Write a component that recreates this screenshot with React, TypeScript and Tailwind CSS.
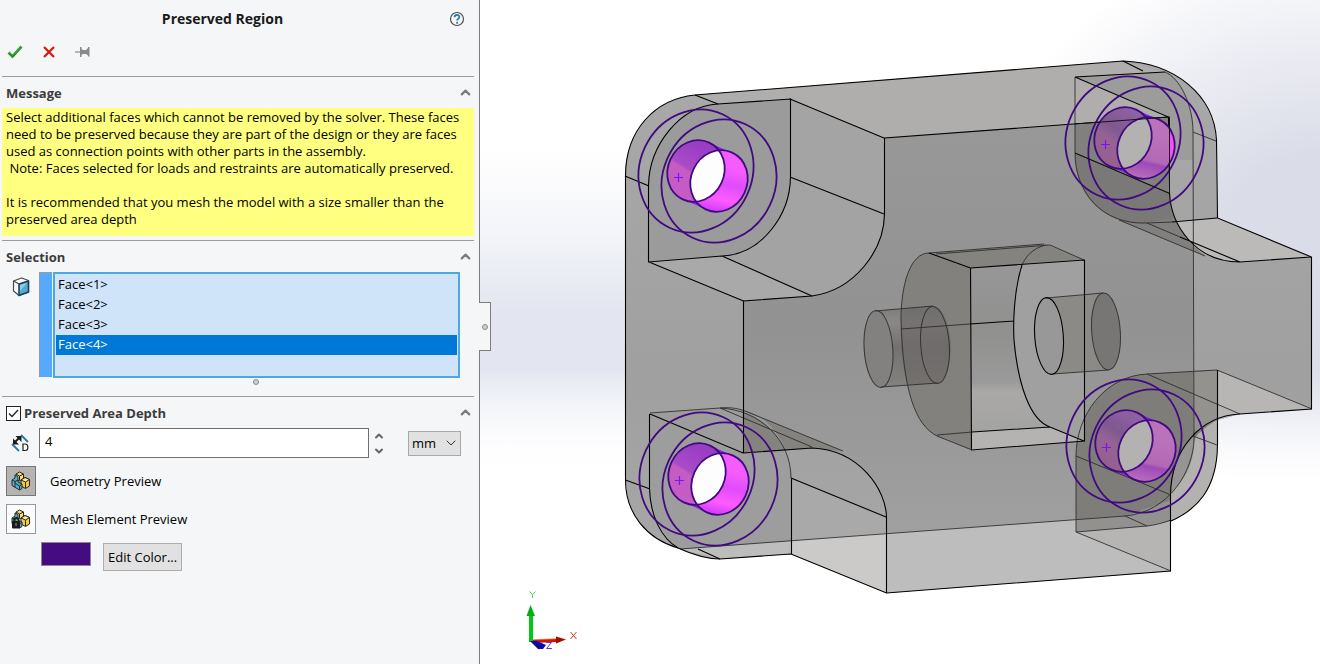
import { useState } from 'react'
import { ChevronDown, ChevronUp } from 'lucide-react'

const FACES = ["Face<1>", "Face<2>", "Face<3>", "Face<4>"]

// centre of the near rim of every bolt hole
const HOLES = [
    { id: "tl", x: 719, y: 181, muted: false },
    { id: "bl", x: 720, y: 484, muted: false },
    { id: "tr", x: 1146, y: 148, muted: true },
    { id: "br", x: 1147, y: 451, muted: true },
]

const CheckIcon = () => (
    <svg width="16" height="14" viewBox="0 0 16 14">
        <path d="M1.5 7.5 5.5 11.5 14.5 1.5" fill="none" stroke="#2ea32e" strokeWidth="2.8" />
        <path d="M2 8.5 5.5 12 9 8.5" fill="none" stroke="#1d7f22" strokeWidth="1" />
    </svg>
)

const CancelIcon = () => (
    <svg width="12" height="12" viewBox="0 0 12 12">
        <path d="M1 1 11 11M11 1 1 11" stroke="#d8180c" strokeWidth="2.2" />
    </svg>
)

const PinIcon = () => (
    <svg width="15" height="12" viewBox="0 0 15 12">
        <path d="M0 6H6" stroke="#8a8a8a" strokeWidth="1.2" />
        <path d="M5 1H6.5V3L8 4H11L13 2V1H14.5V10.500H13V9.500L11 8H8L6.500 9V11H5Z" fill="#8a8a8a" />
    </svg>
)

const HelpIcon = () => (
    <svg width="16" height="16" viewBox="0 0 16 16">
        <circle cx="8" cy="8" r="6.500" fill="#f6f8fa" stroke="#4d4d4d" strokeWidth="1.200" />
        <path d="M5.600 6.200C5.600 3.300 10.400 3.300 10.400 6.100C10.400 7.700 8.100 7.700 8.100 9.600" fill="none" stroke="#2f7fae" strokeWidth="1.800" />
        <rect x="7.200" y="10.800" width="1.900" height="1.900" fill="#2f7fae" />
    </svg>
)

const FaceIcon = () => (
    <svg width="18" height="20" viewBox="0 0 18 20">
        <path d="M1.500 4 9.500 1 16.500 3.500V15L7 18.500 1.500 14Z" fill="#fafafa" stroke="#4a4a4a" strokeWidth="1.200" strokeLinejoin="round" />
        <path d="M7 7 16.500 4V15L7 18.500Z" fill="#5aa9cd" stroke="#123f5c" strokeWidth="1.500" strokeLinejoin="round" />
        <path d="M8 8 15 6 8 14Z" fill="#8fcbe4" />
        <path d="M1.500 4 7 7" stroke="#4a4a4a" strokeWidth="1.200" />
    </svg>
)

const DepthIcon = () => (
    <svg width="20" height="20" viewBox="0 0 20 20">
        <path d="M10 2 17 9M1 11 8 18" stroke="#2b78ad" strokeWidth="1.800" />
        <path d="M4 9 9 4" stroke="#1c1c1c" strokeWidth="2" />
        <path d="M4.500 3H10.500V9ZM2 5.500V11.500H8Z" fill="#1c1c1c" />
        <path d="M12 11H14C17.800 11 17.800 17.500 14 17.500H12Z" fill="#fff" stroke="#1c1c1c" strokeWidth="1.200" />
    </svg>
)

const PartIcon = ({ locked }: { locked?: boolean }) => (
    <svg width="20" height="20" viewBox="0 0 20 20">
        <g stroke="#2a2a1c" strokeWidth="1" strokeLinejoin="round">
            <path d="M5 3 8.500 1 12.500 3V8L8 10 5 8Z" fill="#f3dc86" />
            <path d="M5 3 8.500 5 12.500 3M8.500 5V9" fill="none" />
            <path d="M10 9 14 6.500 18.500 8.500V15L14.500 17.500 10 15Z" fill="#f0c84a" />
            <path d="M10 9 14.500 11 18.500 8.500 14 6.500Z" fill="#fae9a0" />
            <path d="M14.500 11V17" fill="none" />
            <path d="M1 9 4 7V4L7 5.500V11L11 13V17.500L8.500 19 1 14.500Z" fill="#4fb0d4" />
            <path d="M1 9 4 10.500 7 9M4 10.500V16M4 12 8.500 15 11 13M8.500 15V18.500" fill="none" />
        </g>
        {locked && (
            <g>
                <path d="M3 13V11C3 8 7.500 8 7.500 11V13" fill="none" stroke="#1a1a1a" strokeWidth="1.500" />
                <rect x="1" y="12" width="8" height="7.500" rx="1" fill="#1a1a1a" />
                <path d="M5 14V17" stroke="#999" />
            </g>
        )}
    </svg>
)

const Section = ({ title, children }: { title: React.ReactNode, children: React.ReactNode }) => {
    const [open, setOpen] = useState(true)

    return (
        <section className="ml-0.5 mr-[5px] border-t border-[#9c9c9c]">
            <div className="flex h-[31px] items-center justify-between pl-1 pr-px">
                <h2 className="pt-px text-[13px] font-bold text-[#3c3c3c]">{title}</h2>
                <button type="button" aria-label="Toggle section" onClick={() => setOpen(!open)}>
                    {open ? <ChevronUp size={15} strokeWidth={3.5} color="#7c7c7c" /> : <ChevronDown size={15} strokeWidth={3.5} color="#7c7c7c" />}
                </button>
            </div>
            {open && children}
        </section>
    )
}

const Hole = ({ id, x, y, muted }: { id: string, x: number, y: number, muted: boolean }) => (
    <g transform={`translate(${x} ${y})`}>
        <clipPath id={`near-${id}`}>
            <ellipse rx="28.100" ry="31.300" transform="rotate(25)" />
        </clipPath>
        <path d="M-10.400 -38.600 12.600 -28.600 -12.600 28.600 -35.600 18.600Z" fill="#8a1ff0" />
        <ellipse rx="28.100" ry="31.300" transform="translate(-23 -10) rotate(25)" fill={muted ? "url(#farMuted)" : "url(#far)"} />
        <ellipse rx="28.100" ry="31.300" transform="rotate(25)" fill={muted ? "url(#nearMuted)" : "url(#near)"} />
        {id === "tr" && <rect x="23" y="-25" width="8" height="48" fill="#f94dfd" clipPath="url(#near-tr)" />}
        <g clipPath={`url(#near-${id})`}>
            <ellipse rx="28.100" ry="31.300" transform="translate(-23 -10) rotate(25)" fill={muted ? "#b4b2b0" : "#fdfdfe"} />
        </g>
        <g fill="none" stroke="#400a80" strokeWidth="1.800">
            <ellipse rx="28.100" ry="31.300" transform="translate(-23 -10) rotate(25)" />
            <ellipse rx="28.100" ry="31.300" transform="rotate(25)" />
            <ellipse rx="56.300" ry="62.600" transform="translate(-23 -10) rotate(25)" />
            <ellipse rx="56.300" ry="62.600" transform="rotate(25)" />
        </g>
        <path d="M-45 -3.500H-36M-40.500 -8V1" stroke="#7a14f5" strokeWidth="1.200" />
    </g>
)

const Model = () => (
    <svg viewBox="480 0 840 664" className="block h-full w-full" role="img" aria-label="Model view">
        <defs>
            <linearGradient id="far" x1="0.300" y1="0" x2="0.200" y2="1">
                <stop offset="0.150" stopColor="#9a3fc4" />
                <stop offset="0.500" stopColor="#ab4cc6" />
                <stop offset="0.550" stopColor="#c45cc2" />
                <stop offset="1" stopColor="#c65cc6" />
            </linearGradient>
            <linearGradient id="near" x1="0.300" y1="0" x2="0.500" y2="1">
                <stop offset="0.300" stopColor="#f45cfd" />
                <stop offset="0.550" stopColor="#e04cfb" />
                <stop offset="0.800" stopColor="#ff5cff" />
                <stop offset="1" stopColor="#cf3bff" />
            </linearGradient>
            <linearGradient id="farMuted" x1="0.300" y1="0" x2="0.200" y2="1">
                <stop offset="0" stopColor="#9062a4" />
                <stop offset="0.400" stopColor="#805890" />
                <stop offset="0.600" stopColor="#966394" />
                <stop offset="1" stopColor="#95608f" />
            </linearGradient>
            <linearGradient id="nearMuted" x1="0.300" y1="0" x2="0.500" y2="1">
                <stop offset="0.300" stopColor="#ba72bb" />
                <stop offset="0.700" stopColor="#b368b5" />
                <stop offset="0.750" stopColor="#9c4bb8" />
                <stop offset="1" stopColor="#bb6cba" />
            </linearGradient>
            <linearGradient id="body" x1="0" y1="0" x2="0" y2="1">
                <stop offset="0" stopColor="#a9a9a9" />
                <stop offset="0.600" stopColor="#a0a0a0" />
                <stop offset="1" stopColor="#a8a8a8" />
            </linearGradient>
            <linearGradient id="front" x1="0" y1="0" x2="0" y2="1">
                <stop offset="0" stopColor="#989898" />
                <stop offset="0.500" stopColor="#929292" />
                <stop offset="1" stopColor="#a0a0a0" />
            </linearGradient>
            <linearGradient id="bore" x1="0" y1="0" x2="0" y2="1">
                <stop offset="0" stopColor="#979797" />
                <stop offset="0.400" stopColor="#90908f" />
                <stop offset="0.700" stopColor="#9a9a9a" />
                <stop offset="0.760" stopColor="#aaa9a8" />
                <stop offset="1" stopColor="#a3a3a2" />
            </linearGradient>
            <linearGradient id="pin" x1="0" y1="0" x2="0" y2="1">
                <stop offset="0" stopColor="#7c7b79" />
                <stop offset="0.200" stopColor="#8a8886" />
                <stop offset="0.500" stopColor="#747270" />
                <stop offset="1" stopColor="#84827f" />
            </linearGradient>
        </defs>

        {/* silhouette */}
        <path d="M625 176C625 130 655 99 695 95L1123 61C1175 63 1214 95 1216 140L1217 218 1311 257 1312 409 1240 414 1217 420V445C1217 490 1196 510 1171 521V571L887 593 791 554 720 559C704 559 689 553 678 548 647 539 626 514 626 480Z" fill="url(#body)" />

        {/* top, right and bottom sides */}
        <path d="M695 95 1123 61 1165 72 1075 77 1168 117 884 138 790 99 718 104Z" fill="#b0aeac" />
        <path d="M1075 77 1165 72C1180 78 1193 105 1193 132V160L1169 160 1168 117Z" fill="#9c9c9b" />
        <path d="M1147 223 1217 218 1311 257 1240 262C1195 262 1171 225 1169 203Z" fill="#bbbab8" />
        <path d="M680 549 1125 516 1171 500V571L887 593 791 554 720 559Z" fill="#bdbdbd" />
        <path d="M791 541 886 533 887 593 791 554Z" fill="#cbcac8" />
        <path d="M1217 370 1312 409 1240 414 1217 420Z" fill="#b7b6b4" />
        <path d="M1171 495 1200 430 1217 420V445C1217 490 1196 510 1171 521Z" fill="#b3b2b0" />

        {/* front face */}
        <path d="M884 138 1168 117 1169 193C1171 215 1180 236 1193 247V430C1178 448 1171 470 1171 495L1125 516 886 533V517C886 490 860 450 812 448L743 453V301L812 296C855 290 884 250 884 214Z" fill="url(#front)" />

        {/* left lugs */}
        <path d="M649 262V186C649 145 680 106 718 104L790 99V177C790 215 762 254 722 256Z" fill="#9b9b9b" />
        <path d="M790 99 884 138V214L790 177Z" fill="#a4a4a4" />
        <path d="M790 177 884 214C884 250 855 290 812 296L722 256C762 254 790 215 790 177Z" fill="#a3a3a3" />
        <path d="M649 262 722 256 812 296 743 301Z" fill="#a9a9a9" />
        <path d="M650 414 720 408C760 410 791 440 791 478V541L680 549C660 535 650 510 650 488Z" fill="#9d9d9d" />
        <path d="M791 478 886 517V533L791 541Z" fill="#a9a9a9" />
        <path d="M720 408 745 411 843 451 812 448 786 450C775 425 755 410 743 411V453L786 450C772 425 750 408 720 408Z" fill="#85837f" />

        {/* right lugs */}
        <path d="M1075 125 1168 117V193C1171 215 1180 236 1205 256L1119 220C1090 210 1075 185 1075 153Z" fill="#82807e" />
        <path d="M1075 153 1169 193 1172 218 1147 223C1100 225 1075 190 1075 153Z" fill="#7a7977" />
        <path d="M1076 532V456C1076 415 1105 376 1147 374L1217 370V420C1190 435 1171 465 1171 495V521L1147 526Z" fill="#7f7d7a" />
        <path d="M1193 372 1217 370V420L1193 432Z" fill="#94928f" />
        <path d="M1076 519 1125 516 1171 500V521L1147 526 1076 532Z" fill="#92918f" />
        <path d="M1171 495C1172 465 1182 445 1194 436V445C1193 465 1185 480 1171 493Z" fill="#969594" />
        <path d="M1076 532 1147 526 1171 521V571Z" fill="#b6b5b3" />

        {/* centre pocket */}
        <path d="M929 253C910 253 901 285 901 320C903 390 915 425 937 436L972 450 970 268Z" fill="#83817e" />
        <path d="M929 253 1046 244 1084 260 970 268Z" fill="#85837f" />
        <path d="M970 268 1084 260V441L972 450Z" fill="#a0a0a0" />
        <path d="M970 268 1022 265C1014 290 1013 322 1014 340 1018 385 1030 420 1050 427L972 432Z" fill="url(#bore)" />
        <path d="M972 432 1050 427 1084 441 972 450Z" fill="#b4b3b1" />

        {/* pins */}
        <path d="M875 311 933 306C955 310 956 375 938 383L881 387C860 385 858 315 875 311Z" fill="url(#pin)" />
        <path d="M902 309 933 306C955 310 956 375 938 383L908 385C900 360 900 330 902 309Z" fill="#6c6a68" opacity="0.700" />
        <ellipse cx="878.500" cy="349" rx="14.300" ry="38.500" transform="rotate(-4 878.500 349)" fill="#83817f" />
        <path d="M1046 298 1103 293C1125 297 1126 362 1108 370L1053 374Z" fill="#8c8a87" />
        <ellipse cx="1106" cy="331.500" rx="14.300" ry="38.500" transform="rotate(-4 1106 331.500)" fill="#787674" />
        <ellipse cx="1049" cy="336" rx="14.300" ry="38.500" transform="rotate(-4 1049 336)" fill="#989898" />

        {/* hidden edges */}
        <g fill="none" stroke="#2a2a2a" strokeWidth="1" opacity="0.850">
            <path d="M1075 77V153C1075 190 1100 225 1147 223M1119 220 1205 256M1147 223 1180 237M1075 153 1169 193M1147 223 1172 222" />
            <path d="M1165 72C1180 78 1193 105 1193 132L1194 440C1193 470 1170 512 1125 516L680 549M1193 132 1216 141" />
            <path d="M1193 436 1217 445M1125 516 1147 526M1147 374 1240 414M1217 370 1312 409" />
            <path d="M1217 370 1147 374C1105 376 1076 415 1076 456V532L1171 571M1076 456 1171 495M1076 532 1147 526C1155 525 1163 523 1171 520" />
            <path d="M650 413 720 408C760 410 791 440 791 478M720 408 812 447M720 408C728 407 737 408 745 411L843 451" />
            <path d="M901 329 970 324M937 435 972 432M929 253C910 253 901 285 901 320C903 390 915 425 937 436L972 450" />
            <path d="M929 253 1044 244M936 254 1050 245 1084 260M1046 245C1032 248 1025 258 1022 265" />
            <path d="M875 311 933 306M881 387 938 383M1046 298 1103 293M1053 374 1108 370" />
            <ellipse cx="878.500" cy="349" rx="14.300" ry="38.500" transform="rotate(-4 878.500 349)" />
            <ellipse cx="935" cy="345" rx="14.300" ry="38.500" transform="rotate(-4 935 345)" />
            <ellipse cx="1106" cy="331.500" rx="14.300" ry="38.500" transform="rotate(-4 1106 331.500)" />
        </g>

        {/* visible edges */}
        <g fill="none" stroke="#000" strokeWidth="1.100">
            <path d="M625.500 176C625.500 130 655 99 695 95L1123 61C1175 63 1214 95 1216.500 140L1217.500 218 1311.500 257V409L1240 414C1200 416 1171 450 1170.500 495V571L886.500 593 791 554 720 559C704 559 689 553 678 548 647 539 625.500 514 625.500 480Z" />
            <path d="M695 95 718 104M625 176 649 186M1123 61 1143 71" />
            <path d="M648.500 262V186C649 145 680 106 718 104L790.500 99V177C790 215 762 254 722 256ZM790 99 884 138M790 177 884 214M722 256 812 296M649 262 743.500 301" />
            <path d="M743.500 453V301L812 296C855 290 884 250 884.500 214V138L1168 117" />
            <path d="M1217.500 370V445C1217 490 1196 510 1171 521" />
            <path d="M1075 77 1165 72M1075 77 1168.500 117 1169.500 193C1171 225 1195 262 1240 262L1311 257M1172 222 1217 218M1180 237 1240 262" />
            <path d="M625.500 480 650 489M649.500 414V488C650 515 661 538 678 548M650 414 743 453 812 448C860 450 886 490 886.500 517V593M791.500 478V554M791 478 886 517M698 549 720 559" />
            <path d="M929 253 970.500 268 1084.500 260V441L971.500 450 970.500 268M970 324 1014 321M972 432 1050 427 1084 441M1022 265C1014 290 1013 322 1014 340 1018 385 1030 420 1050 427" />
            <ellipse cx="1049" cy="336" rx="14.300" ry="38.500" transform="rotate(-4 1049 336)" />
        </g>

        {HOLES.map((hole) => {
            return <Hole key={hole.id} {...hole} />
        })}
        <path d="M1075 153 1169.500 193.500V117L1075 124" fill="none" stroke="#111" strokeWidth="1" />

        {/* origin triad */}
        <path d="M531 612V642" stroke="#00c814" strokeWidth="4" />
        <path d="M530.500 605 535 616H526.500Z" fill="#00b010" />
        <path d="M533 640 556 639" stroke="#d9a070" strokeWidth="1.500" />
        <path d="M533 641.500 557 640.500" stroke="#dc1200" strokeWidth="3" />
        <path d="M556 636.500 566 639.500 556 643.500Z" fill="#a30d00" />
        <path d="M530 641H537L546 645 543 649H538Z" fill="#0a0aa8" />
        <g fill="none" strokeWidth="1">
            <path d="M529.500 591.500 532.500 594.500 535.500 591.500M532.500 594.500V598" stroke="#4fd44f" />
            <path d="M570.500 632 576.500 639M576.500 632 570.500 639" stroke="#e03020" />
            <path d="M546 642.500H551.500L546.500 648.500H552" stroke="#4545e8" />
        </g>
    </svg>
)

const App = () => {
    const [selected, setSelected] = useState("Face<4>")
    const [depth, setDepth] = useState("4")
    const [enabled, setEnabled] = useState(true)
    const [preview, setPreview] = useState("geometry")

    const stepDepth = (step: number) => {
        setDepth(String(Math.max(0, Number(depth) + step)))
    }

    return (
        <div className="flex h-screen overflow-hidden bg-white font-['Open_Sans','Noto_Sans',sans-serif] text-[13px] leading-[17px] text-black">
            <aside className="relative w-[480px] shrink-0 border-r border-[#7d7d7d] bg-[#f4f6f8]">
                <header className="flex h-[38px] items-center pr-[14px]">
                    <h1 className="flex-1 pr-1 text-center text-sm font-bold text-[#1a1a1a]">Preserved Region</h1>
                    <button type="button" aria-label="Help"><HelpIcon /></button>
                </header>
                <div className="flex h-[38px] items-center gap-5 pb-[10px] pl-[7px]">
                    <button type="button" aria-label="OK"><CheckIcon /></button>
                    <button type="button" aria-label="Cancel"><CancelIcon /></button>
                    <button type="button" aria-label="Keep visible"><PinIcon /></button>
                </div>

                <Section title="Message">
                    <div className="mb-1 bg-[#ffff80] px-1 pb-2 pt-px">
                        <p>Select additional faces which cannot be removed by the solver. These faces<br />need to be preserved because they are part of the design or they are faces<br />used as connection points with other parts in the assembly.<br />&nbsp;Note: Faces selected for loads and restraints are automatically preserved.</p>
                        <p className="pt-[17px]">It is recommended that you mesh the model with a size smaller than the<br />preserved area depth</p>
                    </div>
                </Section>

                <Section title="Selection">
                    <div className="flex pr-[14px]">
                        <div className="w-[37px] pl-[10px] pt-[5px]"><FaceIcon /></div>
                        <div className="mb-px mr-px w-[13px] border-l border-t border-[#999] bg-[#55aaff]" />
                        <ul role="listbox" aria-label="Selected faces" className="h-[106px] flex-1 border-2 border-[#4aa9e2] bg-[#cfe4f8] p-px">
                            {FACES.map((face) => {
                                return (
                                    <li key={face} role="option" aria-selected={face === selected} onClick={() => setSelected(face)} className={face === selected ? "h-5 bg-[#0078d7] px-0.5 leading-[18px] text-white" : "h-5 px-0.5 leading-[18px]"}>{face}</li>
                                )
                            })}
                        </ul>
                    </div>
                    <div className="flex h-[18px] justify-center pr-10 pt-px pl-[76px]">
                        <span className="size-1.5 rounded-full border border-[#8c8c8c] bg-[#cfcfcf]" />
                    </div>
                </Section>

                <Section title={
                    <label className="flex items-center gap-[3px]">
                        <span className="grid size-[15px] place-items-center">
                            <input type="checkbox" checked={enabled} onChange={(e) => setEnabled(e.target.checked)} className="col-start-1 row-start-1 size-[15px] appearance-none border border-[#222] bg-white" />
                            {enabled && <svg width="11" height="9" viewBox="0 0 11 9" className="pointer-events-none col-start-1 row-start-1"><path d="M1 4.500 4 7.500 10 1" fill="none" stroke="#222" strokeWidth="1.300" /></svg>}
                        </span>
                        Preserved Area Depth
                    </label>
                }>
                    <div className="flex items-center pr-[13px]">
                        <div className="w-[37px] pl-[9px]"><DepthIcon /></div>
                        <input type="text" aria-label="Depth" value={depth} onChange={(e) => setDepth(e.target.value)} className="h-[30px] min-w-0 flex-1 border border-[#6f6f6f] bg-white px-[5px] pb-1" />
                        <div className="flex h-[30px] w-5 flex-col items-center justify-around">
                            <button type="button" aria-label="Increase" onClick={() => stepDepth(1)}><ChevronUp size={12} strokeWidth={4} color="#666" /></button>
                            <button type="button" aria-label="Decrease" onClick={() => stepDepth(-1)}><ChevronDown size={12} strokeWidth={4} color="#666" /></button>
                        </div>
                        <div className="ml-[19px] grid w-[53px] items-center">
                            <select aria-label="Unit" className="col-start-1 row-start-1 h-[25px] appearance-none border border-[#a8a8a8] bg-[#e1e1e1] pl-[3px]">
                                <option>mm</option>
                                <option>cm</option>
                                <option>in</option>
                            </select>
                            <ChevronDown size={16} strokeWidth={1.5} color="#333" className="pointer-events-none col-start-1 row-start-1 mr-0.5 justify-self-end" />
                        </div>
                    </div>
                    <div className="mt-2 flex items-center gap-[14px] pl-1">
                        <button type="button" id="geometry" aria-pressed={preview === "geometry"} onClick={() => setPreview("geometry")} className={preview === "geometry" ? "grid size-[30px] place-items-center border border-[#777] bg-[#b5b4b3]" : "grid size-[30px] place-items-center border border-[#999] bg-[#fafbfc]"}><PartIcon /></button>
                        <label htmlFor="geometry">Geometry Preview</label>
                    </div>
                    <div className="mt-2 flex items-center gap-[14px] pl-1">
                        <button type="button" id="mesh" aria-pressed={preview === "mesh"} onClick={() => setPreview("mesh")} className={preview === "mesh" ? "grid size-[30px] place-items-center border border-[#777] bg-[#b5b4b3]" : "grid size-[30px] place-items-center border border-[#999] bg-[#fafbfc]"}><PartIcon locked /></button>
                        <label htmlFor="mesh">Mesh Element Preview</label>
                    </div>
                    <div className="mt-2 flex items-start gap-3 pl-[39px]">
                        <span className="h-6 w-[50px] border border-[#8a8a8a] bg-[#440c80]" />
                        <button type="button" className="mt-px h-7 border border-[#adadad] bg-[#e1e1e1] px-1">Edit Color...</button>
                    </div>
                </Section>

                {/* splitter handle */}
                <div className="absolute left-full top-[302px] z-10 grid h-[49px] w-3 place-items-center border border-l-0 border-[#7d7d7d] bg-[#f4f6f8]">
                    <span className="size-1.5 rounded-full border border-[#8c8c8c] bg-[#cfcfcf]" />
                </div>
            </aside>

            <main className="min-w-0 flex-1 bg-[linear-gradient(to_bottom,transparent_370px,white_480px),radial-gradient(ellipse_340px_320px_at_100%_250px,#dadce8_30%,transparent),linear-gradient(to_bottom,white_150px,#f4f5f9_230px,#e3e6f0_310px,#e3e6f0_370px,white_470px)]">
                <Model />
            </main>
        </div>
    )
}

export default App
